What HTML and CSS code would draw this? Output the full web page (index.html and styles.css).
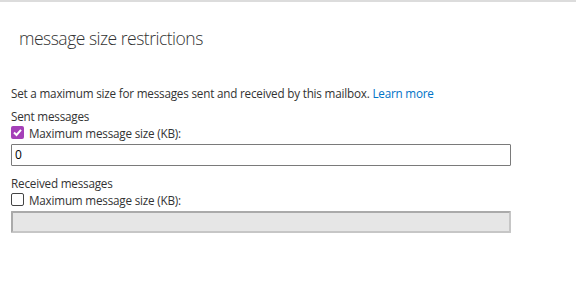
FILE: index.html
```html
<!DOCTYPE html>
<html>
<head>
<meta charset="utf-8">
<link rel="stylesheet" href="styles.css">
</head>
<body>
<div class="page">
  <h1 class="title">message size restrictions</h1>
  <div class="content">
    <p class="intro">Set a maximum size for messages sent and received by this mailbox. <a class="link" href="#">Learn more</a></p>
    <div class="group">
      <div class="group-label">Sent messages</div>
      <label class="check-row">
        <span class="box checked">
          <svg width="13" height="13" viewBox="0 0 13 13"><path d="M3 6.5 L5.5 9 L10 3.8" fill="none" stroke="#fff" stroke-width="2"/></svg>
        </span>
        <span>Maximum message size (KB):</span>
      </label>
      <div class="field">0</div>
    </div>
    <div class="group group2">
      <div class="group-label">Received messages</div>
      <label class="check-row">
        <span class="box"></span>
        <span>Maximum message size (KB):</span>
      </label>
      <div class="field disabled"></div>
    </div>
  </div>
</div>
</body>
</html>
```

FILE: styles.css
```css
html, body {
  margin: 0;
  padding: 0;
  background: #fff;
}
.page {
  border-top: 2px solid #dcdcdc;
  width: 576px;
  height: 280px;
  font-family: "Open Sans", "Noto Sans", sans-serif;
  color: #333;
}
.title {
  margin: 0;
  padding: 23px 0 0 19px;
  font-size: 17.5px;
  font-weight: 300;
  letter-spacing: -0.5px;
  line-height: 26px;
  color: #333;
}
.content {
  padding: 34px 0 0 11px;
  font-size: 11.7px;
  letter-spacing: -0.2px;
}
.intro {
  margin: 0;
  line-height: 16px;
}
.link {
  color: #0072c6;
  text-decoration: none;
}
.group {
  margin-top: 7px;
}
.group2 {
  margin-top: 9px;
}
.group-label {
  line-height: 16px;
}
.check-row {
  display: flex;
  align-items: center;
  gap: 5px;
  height: 17px;
  margin-top: 0;
}
.box {
  width: 11px;
  height: 11px;
  border: 1px solid #444;
  border-radius: 2px;
  display: flex;
  align-items: center;
  justify-content: center;
  box-sizing: content-box;
}
.box.checked {
  width: 13px;
  height: 13px;
  border: none;
  background: #a540b8;
}
.field {
  margin-top: 3px;
  width: 500px;
  height: 22px;
  box-sizing: border-box;
  border: 1px solid #7a7a7a;
  border-radius: 1px;
  line-height: 20px;
  padding: 0 3px;
  color: #000;
  font-size: 12px;
}
.field.disabled {
  background: #e6e6e6;
  border: 2px solid #c6c6c6;
  border-top-color: #aaa;
  border-left-color: #aaa;
}
```
